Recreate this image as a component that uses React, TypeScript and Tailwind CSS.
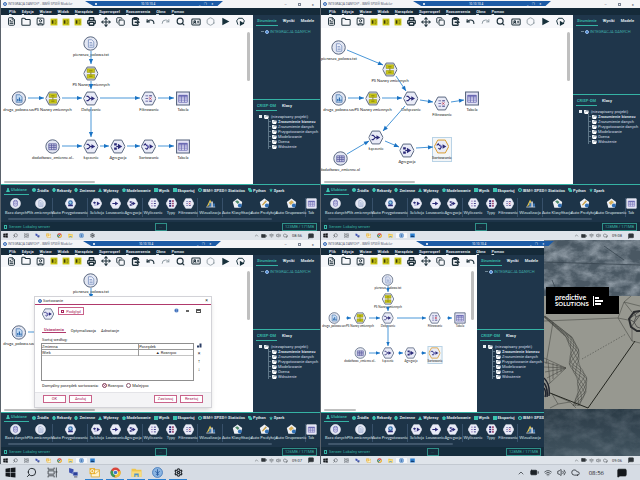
import React from 'react';
import clsx from 'clsx';
import {
  BatteryFull,
  CircleHelp,
  ChevronUp,
  Cloud,
  Copy,
  ClipboardPaste,
  FileText,
  Folder,
  Hexagon,
  IdCard,
  MessageSquareText,
  Move,
  Printer,
  Redo,
  Search,
  Settings,
  SquareUser,
  Undo,
  Volume2,
  Wifi,
} from 'lucide-react';

type Shape = 'circle' | 'hex' | 'square' | 'none';
type Glyph =
  | 'doc'
  | 'chartDoc'
  | 'sheet'
  | 'names'
  | 'merge'
  | 'filter'
  | 'table'
  | 'aggregate'
  | 'sort'
  | 'database'
  | 'prep'
  | 'select'
  | 'sample'
  | 'derive'
  | 'types'
  | 'chart'
  | 'auto1'
  | 'auto2'
  | 'auto3';

interface FlowNode {
  x: number;
  y: number;
  shape: Shape;
  glyph: Glyph;
  label: string;
  selected?: boolean;
}

type Edge = [number, number, number, number];

interface Flow {
  nodes: FlowNode[];
  edges: Edge[];
}

const NAVY = '#2b2a78';

const NodeGlyph: React.FC<{ glyph: Glyph }> = ({ glyph }) => {
  switch (glyph) {
    case 'doc':
      return (
        <g fill="#f4f6ff" stroke="#6f87b8" strokeWidth="1.4">
          <path d="M10 7h6l4 4v10H10z" />
          <path d="M12 12h5M12 15h6M12 18h6" />
        </g>
      );
    case 'chartDoc':
      return (
        <g fill="#c4dcf5" stroke="#4d78ad" strokeWidth="1.4">
          <path d="M9 7h7l4 4v10H9z" />
          <path d="M12 19v-4M15 19v-7M18 19v-3" stroke="#1f5fa8" strokeWidth="2" />
        </g>
      );
    case 'sheet':
      return (
        <g fill="#cfd0ea" stroke="#55569a" strokeWidth="1.4">
          <path d="M7 9h14v11H7z" />
          <path d="M7 12.500h14M7 16h14M12 9v11M16.500 9v11" />
        </g>
      );
    case 'names':
      return (
        <g>
          <path d="M7 5h14v7H7zM7 16h14v7H7z" fill="#c9c614" stroke="#8f8d10" strokeWidth="1" />
          <path d="M14 12v4M11 9h6M11 19h6" stroke="#77750e" strokeWidth="1.600" />
        </g>
      );
    case 'merge':
      return (
        <g fill="none" stroke={NAVY} strokeWidth="2">
          <path d="M6 10h3l4 4-4 4H6M12 14h4" />
          <path d="M15 10l7 4-7 4z" fill={NAVY} stroke="none" />
        </g>
      );
    case 'filter':
      return (
        <g strokeWidth="1.800" fill="none">
          <path d="M8 9h5M8 14h5M8 19h5" stroke="#6d6aa8" />
          <path d="M15 9h5M15 19h5" stroke={NAVY} />
          <path d="M15 12l4 4M19 12l-4 4" stroke="#c2405a" />
        </g>
      );
    case 'table':
      return (
        <g fill="#eeeefb" stroke="#6b6ab3" strokeWidth="1.500">
          <path d="M6 8h16v13H6z" />
          <path d="M6 9h16" strokeWidth="3" />
          <path d="M6 13h16M6 17h16M11 8v13M17 8v13" />
        </g>
      );
    case 'aggregate':
      return (
        <g fill={NAVY}>
          <path d="M7 8h5v4H7zM7 16h5v4H7z" />
          <path d="M11 13h4v2h-4zM14 9l8 5-8 5z" />
        </g>
      );
    case 'sort':
      return (
        <g>
          <path d="M5 12l3-3 3 4M8 17l3 2 3-4" fill="none" stroke={NAVY} strokeWidth="2" />
          <path d="M11 10l5 4-5 3z" fill="#6a6ab8" />
          <path d="M16 10l7 4-7 4z" fill={NAVY} />
        </g>
      );
    case 'database':
      return (
        <g fill="#dcdcf4" stroke="#5d5ca8" strokeWidth="1.600">
          <path d="M9 8v10c0 4 10 4 10 0V8" />
          <ellipse cx="14" cy="8" rx="5" ry="2" />
          <path d="M9 13c0 3 10 3 10 0" />
        </g>
      );
    case 'prep':
      return (
        <g>
          <circle cx="14" cy="12" r="6" fill="#3a6fae" />
          <path d="M10 11l3-3 4 3-2 4z" fill="#9fd0e8" />
          <path d="M8 17h12v4H8z" fill={NAVY} />
        </g>
      );
    case 'select':
      return (
        <g fill={NAVY}>
          <path d="M5 12l4-3 4 3-4 3z" />
          <path d="M15 9l8 5-8 5z" />
          <path d="M8 17h6v2H8z" fill="#7c7ac0" />
        </g>
      );
    case 'sample':
      return (
        <g fill={NAVY}>
          <path d="M6 13h8v2H6zM13 9l8 5-8 5z" />
        </g>
      );
    case 'derive':
      return (
        <g strokeWidth="2.200" fill="none">
          <path d="M8 8h4M8 14h4M8 20h4" stroke="#8a68b0" />
          <path d="M15 8h5M15 14h5M15 20h5" stroke={NAVY} />
        </g>
      );
    case 'types':
      return (
        <g>
          <path d="M8 6h5v4H8zM8 12h5v4H8zM8 18h5v4H8z" fill={NAVY} />
          <path d="M15 6h5v4h-5zM15 12h5v4h-5zM15 18h5v4h-5z" fill="#a05078" />
        </g>
      );
    case 'chart':
      return (
        <g>
          <path d="M4 23L13 4l4 9z" fill="#e8c547" />
          <path d="M11 12h4v11h-4z" fill="#3b7fc4" />
          <path d="M16 9h4v14h-4z" fill="#d8dde8" />
          <path d="M21 14h4v9h-4z" fill="#3b7fc4" />
          <path d="M3 22h23v2H3z" fill="#c7cfdc" />
        </g>
      );
    case 'auto1':
    case 'auto2':
    case 'auto3':
      return (
        <g>
          <path d="M14 1l12 9-4 15H6L2 10z" fill="#eef0f4" />
          {glyph === 'auto1' && <path d="M8 9l5-3 6 4-4 5z" fill="#4b8a6a" />}
          {glyph === 'auto2' && <path d="M7 18L17 6l3 3L10 19z" fill="#c9a24c" />}
          {glyph === 'auto3' && <path d="M7 12l7-6 6 5-8 7z" fill="#d9b25a" />}
          <circle cx="20" cy="19" r="5" fill="#2f6fb5" />
        </g>
      );
  }
};

const NodeIcon: React.FC<{ shape: Shape; glyph: Glyph; className: string; stroke?: string }> = ({
  shape,
  glyph,
  className,
  stroke = '#55637c',
}) => (
  <svg viewBox="0 0 28 28" className={clsx('shrink-0', className)}>
    {shape === 'circle' && <circle cx="14" cy="14" r="12.500" fill="#e3e7f3" stroke={stroke} strokeWidth="1.800" />}
    {shape === 'hex' && <path d="M7 2h14l6.500 12L21 26H7L.5 14z" fill="#e9ebf7" stroke={stroke} strokeWidth="1.800" />}
    {shape === 'square' && <path d="M2 2h24v24H2z" fill="#e3e3f5" stroke={stroke} strokeWidth="2" />}
    <NodeGlyph glyph={glyph} />
  </svg>
);

const flowOne: Flow = {
  nodes: [
    { x: 90, y: 15, shape: 'circle', glyph: 'doc', label: 'pierwsza_polowa.txt' },
    { x: 90, y: 45, shape: 'hex', glyph: 'names', label: 'PS Nazwy zmiennych' },
    { x: 18, y: 70, shape: 'circle', glyph: 'chartDoc', label: 'druga_polowa.sav' },
    { x: 52, y: 70, shape: 'hex', glyph: 'names', label: 'PS Nazwy zmiennych' },
    { x: 90, y: 70, shape: 'hex', glyph: 'merge', label: 'Dołączanie' },
    { x: 148, y: 70, shape: 'hex', glyph: 'filter', label: 'Filtrowanie' },
    { x: 182, y: 70, shape: 'square', glyph: 'table', label: 'Tabela' },
    { x: 52, y: 118, shape: 'circle', glyph: 'sheet', label: 'dodatkowe_zmienne.xl..' },
    { x: 90, y: 118, shape: 'hex', glyph: 'merge', label: 'Łączenie' },
    { x: 117, y: 118, shape: 'hex', glyph: 'aggregate', label: 'Agregacja' },
    { x: 148, y: 118, shape: 'hex', glyph: 'sort', label: 'Sortowanie' },
    { x: 182, y: 118, shape: 'square', glyph: 'table', label: 'Tabela' },
  ],
  edges: [
    [90, 23, 90, 36],
    [90, 53, 90, 61],
    [27, 70, 43, 70],
    [61, 70, 81, 70],
    [99, 70, 139, 70],
    [157, 70, 173, 70],
    [90, 79, 90, 109],
    [61, 118, 81, 118],
    [99, 118, 108, 118],
    [126, 118, 139, 118],
    [157, 118, 173, 118],
  ],
};

const flowTwo: Flow = {
  nodes: [
    { x: 18, y: 19, shape: 'circle', glyph: 'doc', label: 'pierwsza_polowa.txt' },
    { x: 69, y: 41, shape: 'hex', glyph: 'names', label: 'PS Nazwy zmiennych' },
    { x: 18, y: 70, shape: 'circle', glyph: 'chartDoc', label: 'druga_polowa.sav' },
    { x: 52, y: 70, shape: 'hex', glyph: 'names', label: 'PS Nazwy zmiennych' },
    { x: 90, y: 70, shape: 'hex', glyph: 'merge', label: 'Dołączanie' },
    { x: 121, y: 75, shape: 'hex', glyph: 'filter', label: 'Filtrowanie' },
    { x: 151, y: 70, shape: 'square', glyph: 'table', label: 'Tabela' },
    { x: 55, y: 109, shape: 'hex', glyph: 'merge', label: 'Łączenie' },
    { x: 86, y: 122, shape: 'hex', glyph: 'aggregate', label: 'Agregacja' },
    { x: 121, y: 118, shape: 'hex', glyph: 'sort', label: 'Sortowanie', selected: true },
    { x: 19, y: 130, shape: 'circle', glyph: 'sheet', label: 'dodatkowe_zmienne.xl' },
  ],
  edges: [
    [26, 22, 62, 37],
    [75, 48, 85, 63],
    [27, 70, 43, 70],
    [61, 70, 81, 70],
    [99, 72, 112, 74],
    [130, 74, 143, 72],
    [84, 78, 62, 103],
    [64, 113, 78, 119],
    [95, 120, 112, 119],
    [26, 126, 48, 113],
  ],
};

const flowThree: Flow = {
  nodes: [
    { x: 90, y: 13, shape: 'circle', glyph: 'doc', label: 'pierwsza_polowa.txt' },
    { x: 18, y: 65, shape: 'circle', glyph: 'chartDoc', label: 'druga_polowa.sav' },
  ],
  edges: [
    [90, 21, 90, 32],
    [27, 65, 43, 65],
  ],
};

const flowFour: Flow = {
  nodes: [
    { x: 67, y: 13, shape: 'circle', glyph: 'doc', label: 'pierwsza_polowa.txt' },
    { x: 67, y: 32, shape: 'hex', glyph: 'names', label: 'PS Nazwy zmiennych' },
    { x: 13, y: 51, shape: 'circle', glyph: 'chartDoc', label: 'druga_polowa.sav' },
    { x: 39, y: 51, shape: 'hex', glyph: 'names', label: 'PS Nazwy zmiennych' },
    { x: 67, y: 51, shape: 'hex', glyph: 'merge', label: 'Dołączanie' },
    { x: 114, y: 51, shape: 'hex', glyph: 'filter', label: 'Filtrowanie' },
    { x: 139, y: 51, shape: 'square', glyph: 'table', label: 'Tabela' },
    { x: 39, y: 86, shape: 'circle', glyph: 'sheet', label: 'dodatkowe_zmienne.xl..' },
    { x: 67, y: 86, shape: 'hex', glyph: 'merge', label: 'Łączenie' },
    { x: 90, y: 86, shape: 'hex', glyph: 'aggregate', label: 'Agregacja' },
    { x: 114, y: 86, shape: 'hex', glyph: 'sort', label: 'Sortowanie', selected: true },
  ],
  edges: [
    [67, 19, 67, 25],
    [67, 39, 67, 44],
    [25, 51, 30, 51],
    [48, 51, 59, 51],
    [76, 51, 105, 51],
    [126, 51, 131, 51],
    [67, 58, 67, 79],
    [48, 86, 59, 86],
    [77, 86, 82, 86],
    [100, 86, 105, 86],
  ],
};

const arrowHead = ([x1, y1, x2, y2]: Edge, size: number) => {
  const len = Math.hypot(x2 - x1, y2 - y1) || 1;
  const ux = (x2 - x1) / len;
  const uy = (y2 - y1) / len;
  const bx = x2 - ux * size;
  const by = y2 - uy * size;
  const w = size * 0.42;
  return `M${x2} ${y2}L${bx - uy * w} ${by + ux * w}L${bx + uy * w} ${by - ux * w}z`;
};

const Canvas: React.FC<{ flow: Flow; small?: boolean; children?: React.ReactNode }> = ({ flow, small, children }) => (
  <div className="relative min-h-0 flex-1 overflow-hidden bg-white">
    {flow.nodes.map((n, i) => (
      <div
        key={i}
        className={clsx(
          "absolute flex -translate-x-1/2 flex-col items-center font-['Lato',sans-serif] whitespace-nowrap text-[#222]",
          small ? '-mt-[6px] text-[3px] leading-[4px]' : '-mt-[7px] text-[4px] leading-[5px]',
        )}
        style={{ left: n.x, top: n.y }}
      >
        {n.selected && (
          <span
            className={clsx(
              'absolute border border-[#b9d3e6] bg-[#f3f6f8]',
              small ? '-inset-y-px w-[15px]' : '-inset-y-[2px] w-[20px]',
            )}
          />
        )}
        <NodeIcon
          shape={n.shape}
          glyph={n.glyph}
          className={clsx('relative', small ? 'size-3' : 'size-[15px]')}
          stroke={n.selected ? '#d99a2b' : undefined}
        />
        <span className={clsx('relative', !small && 'mt-px')}>{n.label}</span>
      </div>
    ))}
    <svg className="absolute inset-0 size-full" fill="#1a73c4" stroke="#4a97d8">
      {flow.edges.map((e, i) => (
        <g key={i}>
          <line x1={e[0]} y1={e[1]} x2={e[2]} y2={e[3]} strokeWidth="1" />
          <path d={arrowHead(e, small ? 4 : 5)} stroke="none" />
        </g>
      ))}
    </svg>
    <div className="absolute top-1 right-[3px] h-[49px] w-[3px] rounded-full bg-[#bfbfbf]" />
    <div className={clsx('absolute bottom-px left-[3px] h-[2px] rounded-full bg-[#bfbfbf]', small ? 'w-8' : 'w-[91px]')} />
    {children}
  </div>
);

const YellowTool = () => (
  <svg viewBox="0 0 14 14" className="size-[8px]">
    <path d="M1 1h12v12H1z" fill="#c9c614" />
    <path d="M3 4h3v6H3z" fill="#3a3a08" />
    <path d="M8 4h3M8 7h4M8 10h3" stroke="#7b790f" strokeWidth="1.500" />
  </svg>
);

const PlayTool = () => (
  <svg viewBox="0 0 14 14" className="size-[9px]">
    <path d="M2 1l11 6-11 6z" fill="#17303b" />
  </svg>
);

const RunSelectionTool = () => (
  <svg viewBox="0 0 14 14" className="size-[9px]">
    <path d="M3 12L1 6l3-4h6l3 4-2 5" fill="none" stroke="#17303b" strokeWidth="1.500" />
    <path d="M6 6l7 4-7 4z" fill="#17303b" />
  </svg>
);

const tools: { name: string; icon: React.ReactNode; width: string }[] = [
  { name: 'Nowy', icon: <FileText className="size-[9px]" strokeWidth={2.5} />, width: 'w-[14px]' },
  { name: 'Otwórz', icon: <Folder className="size-[10px]" strokeWidth={2.5} />, width: 'w-[15px]' },
  { name: 'Zapisz', icon: <SquareUser className="size-[9px]" strokeWidth={2.5} />, width: 'w-[15px]' },
  { name: 'Węzeł 1', icon: <YellowTool />, width: 'w-3' },
  { name: 'Węzeł 2', icon: <YellowTool />, width: 'w-3' },
  { name: 'Węzeł 3', icon: <YellowTool />, width: 'w-3' },
  { name: 'Drukuj', icon: <Printer className="size-[9px]" strokeWidth={3.5} />, width: 'w-[14px]' },
  { name: 'Wytnij', icon: <Move className="size-[10px]" strokeWidth={2.5} />, width: 'w-[15px]' },
  { name: 'Kopiuj', icon: <Copy className="size-[9px]" strokeWidth={2.5} />, width: 'w-[15px]' },
  { name: 'Wklej', icon: <ClipboardPaste className="size-[9px]" strokeWidth={3.5} />, width: 'w-[15px]' },
  { name: 'Cofnij', icon: <Undo className="size-[9px]" strokeWidth={3} />, width: 'w-[15px]' },
  { name: 'Ponów', icon: <Redo className="size-[9px] text-[#8a969e]" strokeWidth={2.5} />, width: 'w-[15px]' },
  { name: 'Szukaj', icon: <Search className="size-[9px]" strokeWidth={3} />, width: 'w-[15px]' },
  { name: 'Właściwości', icon: <IdCard className="size-[10px]" strokeWidth={2.5} />, width: 'w-[15px]' },
  { name: 'Zatrzymaj', icon: <Hexagon className="size-[9px] text-[#7c8a92]" />, width: 'w-[15px]' },
  { name: 'Uruchom', icon: <PlayTool />, width: 'w-[15px]' },
  { name: 'Uruchom zaznaczenie', icon: <RunSelectionTool />, width: 'w-[15px]' },
];

const Toolbar: React.FC<{ compact?: boolean }> = ({ compact }) => (
  <div className={clsx('flex shrink-0 items-center overflow-hidden bg-[#f7f8fb] pl-[3px] text-[#1f313b]', compact ? 'h-3' : 'h-[13px]')}>
    {tools.map((t) => (
      <button key={t.name} aria-label={t.name} className={clsx('flex shrink-0 items-center justify-center', t.width)}>
        {t.icon}
      </button>
    ))}
  </div>
);

const menus = ['Plik', 'Edycja', 'Wstaw', 'Widok', 'Narzędzia', 'Superwęzeł', 'Rozszerzenia', 'Okno', 'Pomoc'];

const MenuBar = () => (
  <nav className="flex h-[7px] shrink-0 items-center gap-[6px] overflow-hidden bg-[#152a39] pl-2 text-[4px] leading-[5px] font-bold text-[#d5dde2]">
    {menus.map((m) => (
      <button key={m} className="first-letter:underline">
        {m}
      </button>
    ))}
  </nav>
);

const TitleBar: React.FC<{ strip: string; partial?: boolean }> = ({ strip, partial }) => (
  <header className="relative z-10 flex h-2 shrink-0 items-center gap-px bg-[#f4f5f7] pl-[2px] text-[3px] leading-[4px] text-[#3f4b60]">
    <span className="size-1 rounded-full border border-[#3f6fb5] bg-[#a9c3e8]" />
    <span className="font-['Open_Sans',sans-serif] whitespace-nowrap">INTEGRACJA DANYCH* - IBM® SPSS® Modeler</span>
    <div
      className={clsx(
        'absolute top-px flex h-[5px] w-[138px] items-center justify-between bg-[#1c5ba6] px-[10px] text-white [clip-path:polygon(0_0,100%_0,96%_100%,6%_100%)]',
        strip,
      )}
    >
      <span className="size-[2px] bg-white/80" />
      <span className="text-[3px] leading-[4px]">10.10.10.4</span>
      <span className="flex gap-1 text-[3px] leading-[4px]">
        <span>_</span>
        <span>❐</span>
        <span>×</span>
      </span>
    </div>
    {!partial && (
      <div className="ml-auto flex gap-[11px] pr-[6px] text-[4px] leading-[5px]">
        <button aria-label="Minimalizuj">–</button>
        <button aria-label="Maksymalizuj" className="size-[3px] self-center border border-[#7b8594]" />
        <button aria-label="Zamknij">×</button>
      </div>
    )}
  </header>
);

const phases = ['Zrozumienie biznesu', 'Zrozumienie danych', 'Przygotowanie danych', 'Modelowanie', 'Ocena', 'Wdrożenie'];

const FolderGlyph = () => (
  <svg viewBox="0 0 10 8" className="h-1 w-[5px] shrink-0">
    <path d="M0 0h4l1 1h4v2H3L1 7H0z" fill="#e8eef2" />
    <path d="M3 3h7L8 8H1z" fill="#fff" />
  </svg>
);

const PanelTabs: React.FC<{ tabs: string[] }> = ({ tabs }) => (
  <div className="flex items-start gap-1 pl-[3px] text-[4px] leading-[7px] font-bold text-[#dfe6ea]">
    {tabs.map((t, i) => (
      <button key={t} className={clsx('px-px', i === 0 && 'border-b border-[#35b3a4] px-[2px] pb-px text-[#35b3a4]')}>
        {t}
      </button>
    ))}
  </div>
);

const SidePanel: React.FC<{ split: string }> = ({ split }) => (
  <aside className="flex w-[67px] shrink-0 flex-col overflow-hidden bg-[#1f364b] text-[4px] leading-[5px] whitespace-nowrap text-[#d3dce3]">
    <div className={clsx('shrink-0', split)}>
      <div className="pt-[2px]">
        <PanelTabs tabs={['Strumienie', 'Wyniki', 'Modele']} />
      </div>
      <div className="flex items-center gap-px pt-[3px] pl-2 text-[#3fa9a6]">
        <span className="h-px w-[3px] bg-[#6f8796]" />
        <span className="size-1 rounded-full border border-[#9fc1ea] bg-[#3f7fd0]" />
        <span>INTEGRACJA DANYCH</span>
      </div>
    </div>
    <div className="border-t border-[#35b3a4] pt-[2px]">
      <PanelTabs tabs={['CRISP-DM', 'Klasy']} />
      <div className="flex items-center gap-[2px] pt-[3px] pl-[6px]">
        <span className="size-[3px] bg-[#e8eef2]" />
        <FolderGlyph />
        <span>(niezapisany projekt)</span>
      </div>
      <ul className="ml-[15px] border-l border-[#5f7788]">
        {phases.map((p, i) => (
          <li key={p} className="flex items-center gap-px">
            <span className="h-px w-[2px] bg-[#5f7788]" />
            <FolderGlyph />
            <span className={clsx(i === 0 && 'font-bold')}>{p}</span>
          </li>
        ))}
      </ul>
    </div>
  </aside>
);

const paletteTabs: { label: string; mark: string }[] = [
  { label: 'Ulubione', mark: 'M5 0a2 2 0 0 1 2 3l3 7H0l3-7a2 2 0 0 1 2-3z' },
  { label: 'Źródła', mark: 'M5 0a5 5 0 1 0 .01 0z' },
  { label: 'Rekordy', mark: 'M3 0h4l3 5-3 5H3L0 5z' },
  { label: 'Zmienne', mark: 'M3 0h4l3 5-3 5H3L0 5z' },
  { label: 'Wykresy', mark: 'M5 0l5 10H0z' },
  { label: 'Modelowanie', mark: 'M5 0l5 4-2 6H2L0 4z' },
  { label: 'Wynik', mark: 'M0 0h10v10H0z' },
  { label: 'Eksportuj', mark: 'M0 0h10v10H0z' },
  { label: 'IBM® SPSS® Statistics', mark: 'M5 0a5 5 0 1 0 .01 0zM5 3a2 2 0 1 1-.01 0z' },
  { label: 'Python', mark: 'M0 0h7v4h3v6H3V6H0z' },
  { label: 'Spark', mark: 'M5 0l1 4 4 0-3 2 1 4-3-2-3 2 1-4-3-2h4z' },
];

const paletteItems: { label: string; width: string; shape: Shape; glyph: Glyph; end?: boolean }[] = [
  { label: 'Baza danych', width: 'w-6', shape: 'circle', glyph: 'database' },
  { label: 'Plik zmiennych', width: 'w-6', shape: 'circle', glyph: 'doc', end: true },
  { label: 'Auto Przygotowanie', width: 'w-[34px]', shape: 'hex', glyph: 'prep', end: true },
  { label: 'Selekcja', width: 'w-[18px]', shape: 'hex', glyph: 'select' },
  { label: 'Losowanie', width: 'w-[18px]', shape: 'hex', glyph: 'sample' },
  { label: 'Agregacja', width: 'w-[18px]', shape: 'hex', glyph: 'aggregate', end: true },
  { label: 'Wyliczanie', width: 'w-[20px]', shape: 'hex', glyph: 'derive' },
  { label: 'Typy', width: 'w-4', shape: 'hex', glyph: 'types' },
  { label: 'Filtrowanie', width: 'w-[18px]', shape: 'hex', glyph: 'filter', end: true },
  { label: 'Wizualizacja', width: 'w-6', shape: 'none', glyph: 'chart', end: true },
  { label: 'Auto Klasyfikacja', width: 'w-7', shape: 'none', glyph: 'auto1' },
  { label: 'Auto Predykcja', width: 'w-[26px]', shape: 'none', glyph: 'auto2' },
  { label: 'Auto Grupowanie', width: 'w-7', shape: 'none', glyph: 'auto3', end: true },
  { label: 'Tab', width: 'w-[10px]', shape: 'square', glyph: 'table' },
];

const Palette: React.FC<{ compact?: boolean; scroll: string }> = ({ compact, scroll }) => (
  <div className="shrink-0 overflow-hidden border-t border-[#35b3a4] bg-[#1d3448]">
    <div className={clsx('flex gap-[3px] overflow-hidden pl-[3px] text-[4px] font-bold whitespace-nowrap text-[#dfe6ea]', compact ? 'h-[9px] leading-[8px]' : 'h-[10px] leading-[9px]')}>
      {paletteTabs.map((t, i) => (
        <button
          key={t.label}
          className={clsx('flex shrink-0 items-center gap-px', i === 0 && 'border-b border-[#35b3a4] px-[2px] text-[#35b3a4]')}
        >
          <svg viewBox="0 0 10 10" className="size-1">
            <path d={t.mark} fill="#3cc4b0" fillRule="evenodd" />
          </svg>
          {t.label}
        </button>
      ))}
    </div>
    <div className={clsx('mr-[3px] flex overflow-hidden pl-[3px]', compact ? 'h-5 pt-[2px]' : 'h-[22px] pt-[3px]')}>
      {paletteItems.map((p) => (
        <div key={p.label} className={clsx('flex shrink-0 justify-center', p.width, p.end && 'box-content border-r border-[#37506a]')}>
          <button className="flex flex-col items-center font-['Lato',sans-serif] text-[4px] leading-[5px] whitespace-nowrap text-[#d8e0e6]">
            <NodeIcon shape={p.shape} glyph={p.glyph} className="size-[11px]" stroke="#eef0fa" />
            <span className={compact ? '' : 'mt-px'}>{p.label}</span>
          </button>
        </div>
      ))}
    </div>
    <div className="h-[5px] pt-px pl-[7px]">
      <div className={clsx('h-[2px] rounded-full bg-[#40566b]', scroll)} />
    </div>
  </div>
);

const StatusBar: React.FC<{ memory: string }> = ({ memory }) => (
  <footer className="grid h-[9px] shrink-0 grid-cols-[1fr_auto_1fr] items-center bg-[#152c3c] px-[3px] text-[4px] leading-[5px] text-[#35b3a4]">
    <span className="flex items-center gap-[2px]">
      <span className="h-1 w-[3px] border border-[#35b3a4]" />
      Serwer: Lokalny serwer
    </span>
    <button className="h-2 w-3 border border-[#2f8f88] leading-[5px]">...</button>
    <span className="h-2 justify-self-end border border-[#2f8f88] px-[2px] leading-[6px]">{memory}</span>
  </footer>
);

const apps = ['start', 'search', 'tasks', 'remote', 'outlook', 'chrome', 'explorer', 'modeler', 'settings'] as const;
type AppName = (typeof apps)[number] | 'photos';

const AppIcon: React.FC<{ name: AppName; className: string }> = ({ name, className }) => {
  if (name === 'search') return <Search className={clsx('-scale-x-100', className)} />;
  if (name === 'settings') return <Settings className={className} strokeWidth={3} />;
  return (
    <svg viewBox="0 0 20 20" className={className}>
      {name === 'start' && <path d="M1 3l8-1v8H1zM10 2l9-1v9h-9zM1 11h8v7l-8-1zM10 11h9v8l-9-1z" fill="#15181c" />}
      {name === 'tasks' && (
        <path d="M2 1v3h11V1M2 7h11v6H2zM2 19v-3h11v3M17 1v18M15 9h4" fill="none" stroke="#33383d" strokeWidth="1.500" />
      )}
      {name === 'remote' && (
        <g>
          <path d="M2 2l8 2v9l-8-3z" fill="#3c4fb0" />
          <path d="M9 9h9v7H9z" fill="#2b3f9a" stroke="#c9d6ee" />
          <path d="M11 18h6" stroke="#667" strokeWidth="2" />
        </g>
      )}
      {name === 'outlook' && (
        <g>
          <path d="M4 5h15v13H4z" fill="#fff3cf" stroke="#e0a92c" strokeWidth="1.500" />
          <path d="M4 6l8 6 7-6" fill="none" stroke="#e0a92c" strokeWidth="1.500" />
          <path d="M1 2h10v11H1z" fill="#e9b02f" />
          <circle cx="6" cy="7.500" r="2.800" fill="none" stroke="#fff" strokeWidth="1.600" />
        </g>
      )}
      {name === 'chrome' && (
        <g>
          <circle cx="10" cy="10" r="9" fill="#d9453a" />
          <path d="M10 10L2 6a9 9 0 0 0 6 13z" fill="#3a9a55" />
          <path d="M10 10l9-3a9 9 0 0 1-10 12z" fill="#edc23a" />
          <circle cx="10" cy="10" r="4.500" fill="#fff" />
          <circle cx="10" cy="10" r="3.300" fill="#3f78c9" />
        </g>
      )}
      {name === 'explorer' && (
        <g>
          <path d="M1 3h7l2 2h9v13H1z" fill="#f0c64c" />
          <path d="M1 8h18v10H1z" fill="#f8dc7d" />
          <path d="M6 18v-6h8v6h-2v-3H8v3z" fill="#4c94cf" />
        </g>
      )}
      {name === 'modeler' && (
        <g>
          <circle cx="10" cy="10" r="9" fill="#8bb5e2" stroke="#3f76b8" strokeWidth="1.500" />
          <path d="M10 4v12M6 8l4 3 4-3M7 14l3-2 3 2" stroke="#24569c" strokeWidth="1.500" fill="none" />
        </g>
      )}
      {name === 'photos' && (
        <g>
          <path d="M1 2h18v16H1z" fill="#2a7fd0" />
          <path d="M2 16l6-7 4 4 2-2 4 5z" fill="#123c70" />
        </g>
      )}
    </svg>
  );
};

const InnerTaskbar: React.FC<{ time: string; last: AppName; compact?: boolean }> = ({ time, last, compact }) => (
  <div className={clsx('flex shrink-0 items-center justify-between bg-[#dfe4ea] pr-[6px] text-[#2f3439]', compact ? 'h-2' : 'h-[9px]')}>
    <div className="flex">
      {[...apps.slice(0, 8), last].map((a) => (
        <button
          key={a}
          aria-label={a}
          className={clsx('flex w-[11px] justify-center first:w-[9px]', a === 'modeler' && last === 'photos' && 'bg-white/70')}
        >
          <AppIcon name={a} className="size-[5px]" />
        </button>
      ))}
    </div>
    <div className="flex items-center gap-[2px] text-[4px] leading-[5px]">
      <ChevronUp className="size-[5px]" />
      <BatteryFull className="size-[6px] fill-current" />
      <Wifi className="size-[5px]" />
      <Volume2 className="size-[5px]" />
      <Cloud className="size-[5px]" />
      <span className="px-[2px]">{time}</span>
      <MessageSquareText className="ml-[2px] size-[6px] fill-current" />
    </div>
  </div>
);

const dialogButton = 'h-2 w-[23px] border border-[#c9628a] bg-white text-[4px] leading-[6px] text-[#a8265c]';

const SortDialog = () => (
  <div
    role="dialog"
    aria-label="Sortowanie"
    className="absolute top-[29px] left-[33px] flex w-[178px] flex-col border border-[#d3d3d8] bg-white text-[4px] leading-[5px] text-[#2a2a2a] shadow-md"
  >
    <div className="flex h-2 items-center gap-px border-b border-[#b0396b] px-[3px]">
      <span className="size-1 rounded-full border border-[#3f6fb5] bg-[#7da5de]" />
      <span>Sortowanie</span>
      <button aria-label="Zamknij okno" className="ml-auto text-[5px]">
        ×
      </button>
    </div>
    <div className="flex items-start pt-[2px] pr-[10px] pl-[7px]">
      <NodeIcon shape="hex" glyph="sort" className="mt-px size-3" />
      <button className="ml-1 flex h-2 w-[26px] items-center justify-center gap-[2px] border border-[#c9628a] text-[#a8265c]">
        <span className="size-[3px] border border-[#a8265c]" />
        Podgląd
      </button>
      <div className="mt-px ml-auto flex items-center gap-[7px]">
        <CircleHelp className="size-[5px] fill-[#2f63b5] text-[#dbe6f8]" />
        <span className="h-[2px] w-[3px] border-y border-[#666]" />
        <span className="h-1 w-[5px] border border-t-2 border-[#555]" />
      </div>
    </div>
    <div className="mt-[7px] flex gap-[5px] pl-[7px]">
      <button className="border-b border-[#b0396b] px-[2px] font-bold text-[#b0396b]">Ustawienia</button>
      <button>Optymalizacja</button>
      <button>Adnotacje</button>
    </div>
    <div className="mt-1 pl-[7px]">Sortuj według:</div>
    <div className="flex gap-[2px] pt-px pr-[9px] pl-[6px]">
      <div className="h-[38px] flex-1 border border-[#8f8f8f]">
        <table className="w-full border-collapse text-left">
          <thead>
            <tr className="border-b border-[#9a9a9a]">
              <th className="w-[64%] border-r border-[#9a9a9a] p-0 font-normal">Zmienna</th>
              <th className="p-0 font-normal">Porządek</th>
            </tr>
          </thead>
          <tbody>
            <tr className="border-b border-[#c4c4c4]">
              <td className="border-r border-[#9a9a9a] p-0">Wiek</td>
              <td className="p-0 text-center">▲ Rosnąco</td>
            </tr>
          </tbody>
        </table>
      </div>
      <div className="flex w-[6px] flex-col items-center gap-[3px] text-[5px] leading-[5px]">
        <button aria-label="Wybierz zmienne">
          <svg viewBox="0 0 10 10" className="size-[5px]">
            <path d="M0 5h4v4H0zM5 1h4v8H5z" fill="#2c3f66" />
          </svg>
        </button>
        <button aria-label="Usuń">×</button>
        <button aria-label="W górę">↑</button>
        <button aria-label="W dół">↓</button>
      </div>
    </div>
    <div className="flex items-center gap-[3px] pt-[2px] pl-[7px]">
      <span>Domyślny porządek sortowania:</span>
      <span className="flex items-center gap-[3px]">
        {['Rosnąco', 'Malejąco'].map((o, i) => (
          <label key={o} className="flex items-center gap-px">
            <input
              type="radio"
              name="order"
              defaultChecked={i === 0}
              className="size-[5px] appearance-none rounded-full border border-[#8a5a70] bg-white checked:bg-[#a8265c] checked:shadow-[inset_0_0_0_1px_white]"
            />
            {o}
          </label>
        ))}
      </span>
    </div>
    <div className="mt-[4px] flex gap-[3px] border-t border-[#e4e4e8] bg-[#f4f4f6] px-[8px] pt-[2px] pb-1">
      <button className={dialogButton}>OK</button>
      <button className={dialogButton}>Anuluj</button>
      <button className={clsx(dialogButton, 'ml-auto')}>Zastosuj</button>
      <button className={dialogButton}>Resetuj</button>
    </div>
  </div>
);

interface ModelerWindowProps {
  flow: Flow;
  memory: string;
  split: string;
  strip: string;
  compact?: boolean;
  small?: boolean;
  children?: React.ReactNode;
}

const ModelerWindow: React.FC<ModelerWindowProps> = ({ flow, memory, split, strip, compact, small, children }) => (
  <div className="flex min-h-0 min-w-0 flex-1 flex-col">
    <TitleBar strip={strip} partial={small} />
    <MenuBar />
    <div className="flex min-h-0 flex-1">
      <main className="flex min-w-0 flex-1 flex-col">
        <Toolbar compact={compact} />
        <Canvas flow={flow} small={small}>
          {children}
        </Canvas>
      </main>
      <SidePanel split={split} />
    </div>
    <Palette compact={compact} scroll={small ? 'w-[125px]' : 'w-[264px]'} />
    <StatusBar memory={memory} />
  </div>
);

// centre line of the twisted ribbon: x, y, half width
const ribbon = [
  [0, 76, 1],
  [12, 86, 2],
  [25, 97, 3],
  [31, 110, 4],
  [30, 124, 5],
  [38, 138, 5],
  [38, 152, 4],
  [32, 166, 3],
];

const strand = (phase: number) => {
  const points: string[] = [];
  const steps = 56;
  for (let s = 0; s <= steps; s++) {
    const t = (s / steps) * (ribbon.length - 1);
    const i = Math.min(Math.floor(t), ribbon.length - 2);
    const f = t - i;
    const [x1, y1, w1] = ribbon[i];
    const [x2, y2, w2] = ribbon[i + 1];
    const x = x1 + (x2 - x1) * f + Math.sin(t * 2.2 + phase) * (w1 + (w2 - w1) * f);
    points.push(`${x.toFixed(1)},${(y1 + (y2 - y1) * f).toFixed(1)}`);
  }
  return points.join(' ');
};

const Wallpaper = () => (
  <div className="relative w-[96px] shrink-0 overflow-hidden bg-[#46545f]">
    <svg viewBox="0 0 96 216" preserveAspectRatio="none" className="absolute inset-0 size-full" fill="none">
      <defs>
        <filter id="stone" x="0" y="0" width="100%" height="100%">
          <feTurbulence type="fractalNoise" baseFrequency="0.07 0.1" numOctaves="5" seed="11" />
          <feColorMatrix values="0 0 0 0 0.5  0 0 0 0 0.56  0 0 0 0 0.62  1.2 0 0 0 -0.4" />
        </filter>
        <linearGradient id="floor" x1="0" y1="0" x2="0" y2="1">
          <stop offset="0" stopColor="#2b3b46" />
          <stop offset="1" stopColor="#41535f" />
        </linearGradient>
      </defs>
      <rect width="96" height="58" fill="#4a5863" />
      <rect width="96" height="58" filter="url(#stone)" />
      <path d="M0 22l96 3M8 40l6 14M60 6l20 14" stroke="#38454f" strokeWidth="0.800" />
      <rect y="169" width="96" height="47" fill="url(#floor)" />
      <rect y="169" width="96" height="47" filter="url(#stone)" opacity="0.3" />
      <path d="M0 56h96v113H0z" fill="#979890" />
      <g stroke="#4a4c46" strokeWidth="0.600">
        <path d="M0 81l74-3M74 78l6-16 16 4M80 62l7-6M74 78l14 23 8 2M88 101V86M80 62l8 10M74 78l10 2" />
        <path d="M38 119l44-25" strokeDasharray="1.500 1.500" />
        <path d="M9 82L2 124" />
        <path d="M0 118l22 10-17 16M0 122l22 6M0 127l22 1M1 132l21-4M3 138l19-10M6 143l-2-22M9 139v-16M13 135v-11M17 132v-6" />
        <path d="M8 154l6 10 12-2 6 6M14 164l-8 4M8 154l18 8" />
      </g>
      <g stroke="#3c3e3a" strokeWidth="0.500">
        {[0, 0.8, 1.7, 2.6, 3.4, 4.3, 5.3].map((p) => (
          <polyline key={p} points={strand(p)} />
        ))}
      </g>
      <path d="M91 101L44 168 6 153" stroke="#23251f" strokeWidth="1" />
      <path d="M0 138c4 4 6 10 5 18M0 143c3 4 4 8 3 14M0 148c2 3 2 6 1 9" stroke="#20242e" strokeWidth="1.500" />
      <g stroke="#2a2c2e" strokeWidth="0.600">
        <path d="M96 71l-6 1-5 7 2 8 6 4 3 0" strokeWidth="2" />
        <path d="M96 75l-4 2-2 5 3 5 3 1M85 79l11-8M87 87l9-12M90 72l2 5M90 82l-5-3" />
      </g>
    </svg>
    <div className="absolute top-[47px] left-[2px] text-white">
      <div className="h-[9px] w-[63px] bg-black" />
      <div className="h-[18px] w-[73px] bg-black" />
      <div className="absolute top-[7px] left-[9px] flex items-center gap-1 font-['Lato',sans-serif] font-bold">
        <div>
          <div className="text-[7px] leading-[7px]">predictive</div>
          <div className="text-[6px] leading-[6px]">SOLUTIONS</div>
        </div>
        <svg viewBox="0 0 10 10" className="size-[10px]" fill="#fff">
          <path d="M0 0h1v10H0zM2 1h4v2H2zM2 4h8v2H2zM2 7h6v2H2z" />
        </svg>
      </div>
    </div>
  </div>
);

const screen = 'flex min-h-0 min-w-0 flex-col overflow-hidden border-l border-[#5b636c]';

const Taskbar = () => (
  <footer className="flex h-4 shrink-0 items-center justify-between border-t border-[#c3c9d1] bg-[#d6dce4] pr-[13px] text-[#1d2227]">
    <div className="flex self-stretch pl-px">
      {apps.map((a, i) => (
        <button
          key={a}
          aria-label={a}
          className={clsx('mr-[3px] flex w-[18px] items-center justify-center border-b', i > 3 ? 'border-[#2a7fd0]' : 'border-transparent')}
        >
          <AppIcon name={a} className={a === 'settings' ? 'size-[9px]' : 'size-[11px]'} />
        </button>
      ))}
    </div>
    <div className="flex items-center gap-[5px] font-['Open_Sans',sans-serif] text-[6px] leading-[10px]">
      <ChevronUp className="size-2" />
      <BatteryFull className="size-[9px] fill-current" />
      <Wifi className="size-2" />
      <Volume2 className="size-[9px]" />
      <Cloud className="size-[9px]" />
      <span className="px-1">08:56</span>
      <MessageSquareText className="ml-1 size-[10px] fill-[#15181c] text-[#15181c]" />
    </div>
  </footer>
);

export default function App() {
  return (
    <div className="flex h-screen flex-col overflow-hidden bg-[#d6dce4] font-['Roboto',sans-serif]">
      <div className="grid min-h-0 flex-1 grid-cols-2 grid-rows-[15fr_14fr]">
        <section className={screen}>
          <ModelerWindow flow={flowOne} memory="123MB / 171MB" split="h-[84px]" strip="left-[84px]" />
          <InnerTaskbar time="08:56" last="settings" />
        </section>
        <section className={screen}>
          <ModelerWindow flow={flowTwo} memory="128MB / 171MB" split="h-[79px]" strip="left-[92px]" />
          <InnerTaskbar time="09:08" last="photos" />
        </section>
        <section className={screen}>
          <ModelerWindow flow={flowThree} memory="126MB / 171MB" split="h-[74px]" strip="left-[82px]" compact>
            <SortDialog />
          </ModelerWindow>
          <InnerTaskbar time="09:07" last="photos" compact />
        </section>
        <section className={screen}>
          <div className="flex min-h-0 flex-1">
            <ModelerWindow flow={flowFour} memory="128MB / 171MB" split="h-[74px]" strip="left-[95px]" compact small />
            <Wallpaper />
          </div>
          <InnerTaskbar time="09:06" last="photos" compact />
        </section>
      </div>
      <Taskbar />
    </div>
  );
}
